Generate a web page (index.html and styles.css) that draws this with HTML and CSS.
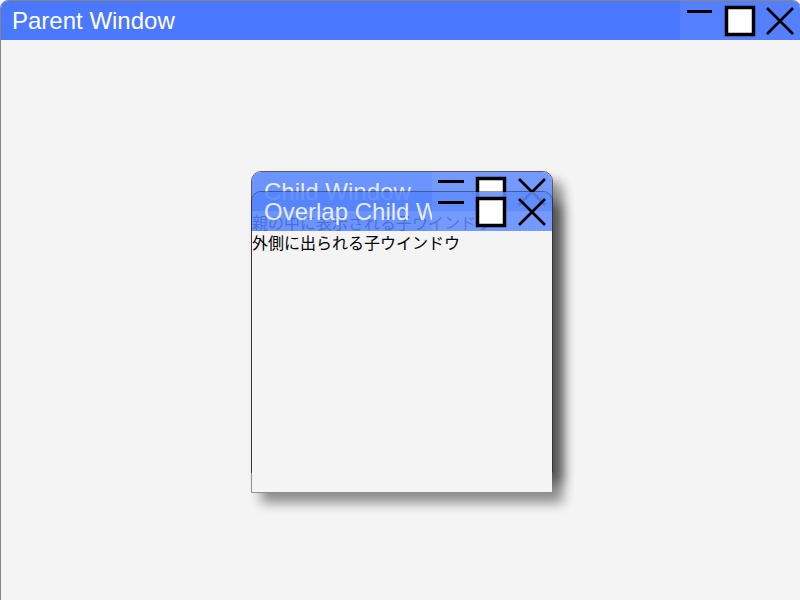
FILE: index.html
```html
<!DOCTYPE html>
<html lang="ja">
<head>
<meta charset="utf-8">
<title>Windows</title>
<link rel="stylesheet" href="styles.css">
</head>
<body>
<div class="desktop">
  <div class="window parent">
    <div class="titlebar">
      <div class="title">Parent Window</div>
      <div class="btns">
        <div class="btn"><svg viewBox="0 0 40 40" width="40" height="40"><line x1="7" y1="10.5" x2="32" y2="10.5" stroke="#000" stroke-width="3"/></svg></div>
        <div class="btn"><svg viewBox="0 0 40 40" width="40" height="40"><rect x="6.5" y="6.5" width="27" height="27" fill="#fff" stroke="#000" stroke-width="3.5"/></svg></div>
        <div class="btn"><svg viewBox="0 0 40 40" width="40" height="40"><path d="M7 7 L33 33 M33 7 L7 33" stroke="#000" stroke-width="2.7" fill="none"/></svg></div>
      </div>
    </div>
    <div class="content"></div>
  </div>

  <div class="window child child-a">
    <div class="titlebar">
      <div class="title">Child Window</div>
      <div class="btns">
        <div class="btn"><svg viewBox="0 0 40 40" width="40" height="40"><line x1="6" y1="9.5" x2="32" y2="9.5" stroke="#000" stroke-width="3"/></svg></div>
        <div class="btn"><svg viewBox="0 0 40 40" width="40" height="40"><rect x="5.5" y="6.5" width="27" height="27" fill="#fff" stroke="#000" stroke-width="3.5"/></svg></div>
        <div class="btn"><svg viewBox="0 0 40 40" width="40" height="40"><path d="M7 7 L33 33 M33 7 L7 33" stroke="#000" stroke-width="2.7" fill="none"/></svg></div>
      </div>
    </div>
    <div class="content"><p class="text">親の中に表示される子ウインドウ</p></div>
  </div>

  <div class="window child child-b">
    <div class="titlebar">
      <div class="title">Overlap Child Window</div>
      <div class="btns">
        <div class="btn"><svg viewBox="0 0 40 40" width="40" height="40"><line x1="6" y1="10.5" x2="32" y2="10.5" stroke="#000" stroke-width="3"/></svg></div>
        <div class="btn"><svg viewBox="0 0 40 40" width="40" height="40"><rect x="5.5" y="6.5" width="27" height="27" fill="#fff" stroke="#000" stroke-width="3.5"/></svg></div>
        <div class="btn"><svg viewBox="0 0 40 40" width="40" height="40"><path d="M7 7 L33 33 M33 7 L7 33" stroke="#000" stroke-width="2.7" fill="none"/></svg></div>
      </div>
    </div>
    <div class="content"><p class="text">外側に出られる子ウインドウ</p></div>
  </div>
</div>
</body>
</html>
```
FILE: styles.css
```css
html, body {
  margin: 0;
  padding: 0;
  background: #f4f4f4;
}
.desktop {
  position: relative;
  width: 800px;
  height: 600px;
  overflow: hidden;
  font-family: "Liberation Sans", Arial, sans-serif;
}
.window {
  position: absolute;
  box-sizing: border-box;
  display: flex;
  flex-direction: column;
  border: 1px solid rgba(0, 0, 0, 0.45);
  overflow: hidden;
}
.parent {
  left: 0;
  top: 0;
  width: 801px;
  height: 602px;
  border-radius: 8px 8px 0 0;
}
.child {
  width: 302px;
  height: 302px;
  border-radius: 10px 10px 0 0;
  box-shadow: 10px 10px 12px rgba(0, 0, 0, 0.42);
}
.child-a {
  left: 251px;
  top: 171px;
  border-color: rgba(40, 40, 40, 0.75);
}
.child-b {
  left: 251px;
  top: 191px;
  border-color: rgba(0, 0, 0, 0.4);
}
.titlebar {
  height: 39px;
  flex: none;
  display: flex;
  background: #4a78ff;
}
.child .titlebar {
  background: rgba(84, 130, 255, 0.85);
}
.title {
  flex: 1;
  min-width: 0;
  overflow: hidden;
  white-space: nowrap;
  padding-left: 11px;
  font-size: 24px;
  line-height: 39px;
  color: #fff;
}
.child .title {
  padding-left: 12px;
  color: rgba(255, 255, 255, 0.85);
}
.btns {
  display: flex;
  flex: none;
}
.btn {
  width: 40px;
  height: 39px;
  background: rgba(255, 255, 255, 0.06);
}
.btn svg {
  display: block;
}
.content {
  flex: 1;
  background: #f4f4f4;
}
.text {
  margin: 0;
  font-family: "Noto Sans CJK JP", "Liberation Sans", sans-serif;
  font-size: 16px;
  line-height: 22px;
  color: #000;
}
```
